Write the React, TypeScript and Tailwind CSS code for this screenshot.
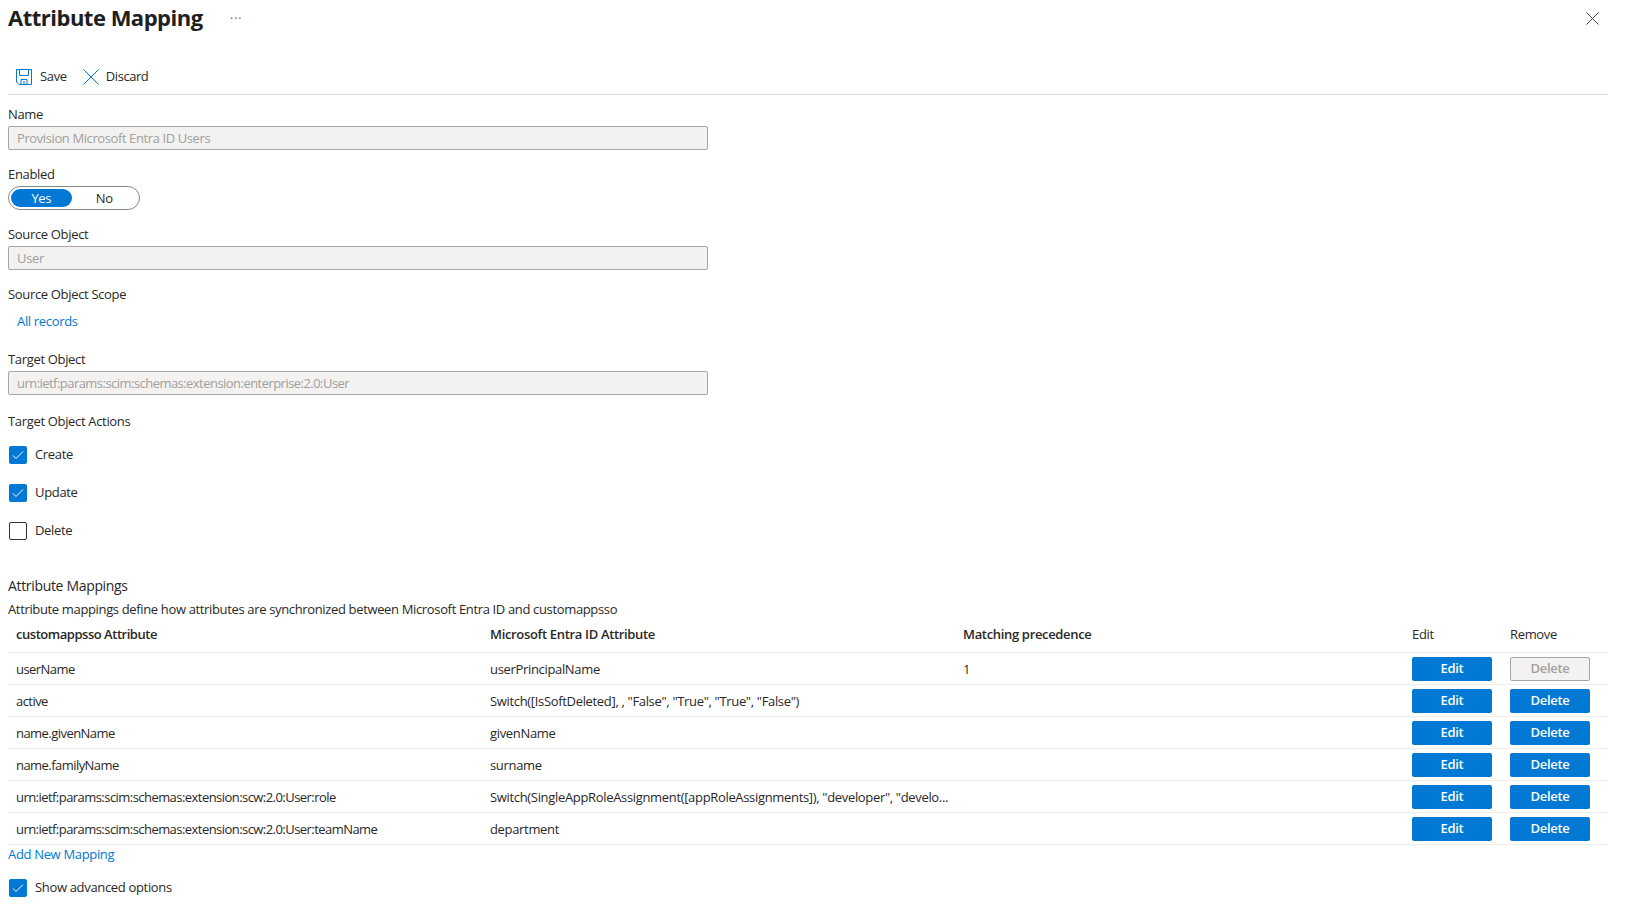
const rows = [
  { target: 'userName', source: 'userPrincipalName', precedence: '1', locked: true },
  { target: 'active', source: 'Switch([IsSoftDeleted], , "False", "True", "True", "False")' },
  { target: 'name.givenName', source: 'givenName' },
  { target: 'name.familyName', source: 'surname' },
  {
    target: 'urn:ietf:params:scim:schemas:extension:scw:2.0:User:role',
    source: 'Switch(SingleAppRoleAssignment([appRoleAssignments]), "developer", "develo...',
  },
  { target: 'urn:ietf:params:scim:schemas:extension:scw:2.0:User:teamName', source: 'department' },
];

function ThinCross({ size, color }: { size: number; color: string }) {
  return (
    <svg width={size} height={size} viewBox="0 0 16 16" fill="none" stroke={color} strokeWidth={16 / size}>
      <path d="M0.5 0.5L15.5 15.5M15.5 0.5L0.5 15.5" />
    </svg>
  );
}

function ReadOnlyField({ label, value, valueClass }: { label: string; value: string; valueClass: string }) {
  return (
    <div>
      <div className="h-[24px] leading-[24px]">{label}</div>
      <div className={`h-[24px] w-[700px] rounded-[2px] border border-[#a6a6a6] bg-[#f3f2f1] px-2 leading-[22px] text-[#a19f9d] ${valueClass}`}>
        {value}
      </div>
    </div>
  );
}

function CheckRow({ label, checked, className }: { label: string; checked: boolean; className?: string }) {
  return (
    <div className={`flex h-[18px] items-center gap-[8px] pl-px ${className ?? ''}`}>
      {checked ? (
        <span className="flex h-[18px] w-[18px] items-center justify-center rounded-[2px] bg-[#0078d4]">
          <svg width="12" height="10" viewBox="0 0 12 10" fill="none" stroke="#ffffff" strokeWidth="1">
            <path d="M1 5.5L4 8.5L11 1.5" />
          </svg>
        </span>
      ) : (
        <span className="h-[18px] w-[18px] rounded-[2px] border border-[#323130] bg-white" />
      )}
      <span>{label}</span>
    </div>
  );
}

function ActionButton({ label, disabled }: { label: string; disabled?: boolean }) {
  return (
    <button
      className={
        disabled
          ? 'block h-[24px] w-[80px] rounded-[2px] border border-[#a6a6a6] bg-[#f3f2f1] font-semibold text-[#a19f9d]'
          : 'block h-[24px] w-[80px] rounded-[2px] bg-[#0078d4] font-semibold text-white'
      }
    >
      {label}
    </button>
  );
}

export default function App() {
  return (
    <div className="h-[910px] overflow-hidden bg-white pl-2 pr-[19px] text-[13px] tracking-[-0.33px] text-[#292827] [font-family:'Open_Sans',sans-serif]">
      <div className="flex h-[36px] items-center justify-between">
        <div className="flex items-center">
          <h1 className="w-[222px] pb-[2px] text-[22px] font-bold tracking-[-0.5px] text-[#201f1e]">Attribute Mapping</h1>
          <span className="relative top-[1px] text-[12px] tracking-[1px] text-[#605e5c]">···</span>
        </div>
        <div className="mr-[9px]">
          <ThinCross size={13} color="#484644" />
        </div>
      </div>

      <div className="mt-[32px] flex h-[27px] items-start border-b border-[#d6d6d6] pl-2">
        <div className="flex h-[18px] items-center gap-[8px]">
          <svg width="16" height="16" viewBox="0 0 16 16" fill="none" stroke="#0078d4" strokeWidth="1">
            <path d="M0.5 0.5H15.5V15.5H3L0.5 13Z" />
            <path d="M3.5 0.5V6.5H12.5V0.5" />
            <path d="M5 15.5V10.5H11V15.5" />
            <path d="M8 12V15" />
          </svg>
          <span>Save</span>
          <div className="ml-[8px]">
            <ThinCross size={16} color="#0078d4" />
          </div>
          <span className="-ml-px tracking-[-0.45px]">Discard</span>
        </div>
      </div>

      <div className="mt-[7px]">
        <ReadOnlyField label="Name" value="Provision Microsoft Entra ID Users" valueClass="tracking-[-0.4px]" />
      </div>

      <div className="mt-[12px] h-[24px] leading-[24px]">Enabled</div>
      <div className="flex h-[24px] w-[132px] items-center rounded-full border border-[#8a8886] px-[2px]">
        <span className="h-[18px] w-[63px] rounded-full bg-[#0078d4] text-center leading-[18px] text-white">Yes</span>
        <span className="w-[68px] text-center leading-[18px]">No</span>
      </div>

      <div className="mt-[12px]">
        <ReadOnlyField label="Source Object" value="User" valueClass="" />
      </div>

      <div className="mt-[12px] h-[24px] leading-[24px]">Source Object Scope</div>
      <div className="mt-[3px] h-[24px] pl-[9px] leading-[24px] text-[#0078d4]">All records</div>

      <div className="mt-[14px]">
        <ReadOnlyField
          label="Target Object"
          value="urn:ietf:params:scim:schemas:extension:enterprise:2.0:User"
          valueClass="tracking-[-0.54px]"
        />
      </div>

      <div className="mt-[14px] h-[24px] leading-[24px]">Target Object Actions</div>
      <CheckRow label="Create" checked className="mt-[13px]" />
      <CheckRow label="Update" checked className="mt-[20px]" />
      <CheckRow label="Delete" checked={false} className="mt-[20px]" />

      <div className="mt-[34px] h-[23px] text-[14px] leading-[24px]">Attribute Mappings</div>
      <div className="h-[24px] leading-[24px] tracking-[-0.35px]">
        Attribute mappings define how attributes are synchronized between Microsoft Entra ID and customappsso
      </div>

      <table className="w-full table-fixed border-collapse">
        <thead>
          <tr className="h-[31px] border-b border-[#e8e8e8] text-left">
            <th className="w-[474px] pb-[3px] pl-2 font-semibold tracking-[-0.47px]">customappsso Attribute</th>
            <th className="w-[473px] pb-[3px] pl-2 font-semibold">Microsoft Entra ID Attribute</th>
            <th className="w-[457px] pb-[3px] pl-2 font-semibold">Matching precedence</th>
            <th className="w-[98px] pb-[3px] font-medium">Edit</th>
            <th className="pb-[3px] font-medium">Remove</th>
          </tr>
        </thead>
        <tbody>
          {rows.map((row) => (
            <tr key={row.target} className="h-[32px] border-b border-[#eeeeee]">
              <td className="truncate pt-[4px] pl-2 tracking-[-0.55px]">{row.target}</td>
              <td className="truncate pt-[4px] pl-2">{row.source}</td>
              <td className="pt-[4px] pl-2">{row.precedence}</td>
              <td className="pt-[2px]">
                <ActionButton label="Edit" />
              </td>
              <td className="pt-[2px]">
                <ActionButton label="Delete" disabled={row.locked} />
              </td>
            </tr>
          ))}
        </tbody>
      </table>

      <div className="h-[19px] leading-[18px] text-[#0078d4]">Add New Mapping</div>
      <CheckRow label="Show advanced options" checked className="mt-[15px]" />
    </div>
  );
}
